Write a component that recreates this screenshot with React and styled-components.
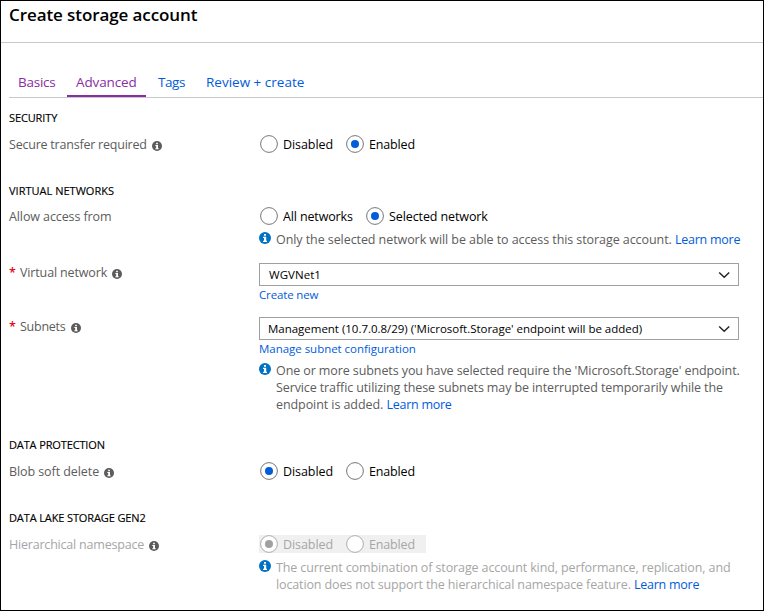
import React from "react";
import styled, { createGlobalStyle } from "styled-components";

const GlobalStyle = createGlobalStyle`
  *, *::before, *::after { box-sizing: border-box; }
  body {
    margin: 0;
    background: #fff;
    color: #000;
    font-family: "Open Sans", "Noto Sans", sans-serif;
    font-size: 12.5px;
    overflow: hidden;
  }
`;

const Blade = styled.main`
  height: 611px;
  border: 1px solid #000;
  background: #fff;
`;

const Header = styled.header`
  height: 42px;
  padding-left: 8px;
  border-bottom: 1px solid #c8c8c8;
`;

const Title = styled.h1`
  margin: 0;
  font-size: 17px;
  font-weight: 600;
  line-height: 27px;
  letter-spacing: -0.09px;
`;

const TabBar = styled.nav`
  display: flex;
  align-items: flex-end;
  height: 55px;
  margin-left: 8px;
  border-bottom: 1px solid #c8c8c8;
`;

const Tab = styled.a`
  height: 28px;
  padding: 0 0 0 ${(p) => p.$inset ?? 9}px;
  width: ${(p) => p.$width}px;
  font-size: 13.5px;
  line-height: 27px;
  white-space: nowrap;
  letter-spacing: ${(p) => p.$track}px;
  color: ${(p) => (p.$visited ? "#8a2da5" : "#015cda")};
  border-bottom: 2px solid ${(p) => (p.$active ? "#8a2da5" : "transparent")};
`;

const Form = styled.div`
  padding: 11px 0 0 8px;
`;

const Section = styled.section`
  margin-bottom: ${(p) => p.$after}px;
`;

const SectionTitle = styled.h2`
  margin: 0 0 ${(p) => p.$gap ?? 8}px;
  font-size: 11px;
  font-weight: 500;
  line-height: 18px;
  letter-spacing: ${(p) => p.$track}px;
  -webkit-text-stroke: 0.15px #000;
`;

const Field = styled.div`
  display: grid;
  grid-template-columns: 250px 1fr;
  align-items: start;
  margin-top: ${(p) => p.$before ?? 0}px;
`;

const Label = styled.div`
  display: flex;
  align-items: center;
  height: 18px;
  white-space: nowrap;
  letter-spacing: ${(p) => p.$track}px;
  color: ${(p) => (p.$disabled ? "#a6a6a6" : "#5c5c5c")};
`;

const Required = styled.span`
  width: 11px;
  color: #e00b1c;
  font-size: 12.5px;
  font-weight: 600;
`;

const LabelIcon = styled.svg`
  flex: none;
  width: 10px;
  height: 10px;
  margin: 3px 0 0 5px;
`;

const RadioGroup = styled.div`
  display: flex;
  width: ${(p) => p.$width ?? 240}px;
  height: 18px;
  background: ${(p) => (p.$disabled ? "#f0f0f0" : "transparent")};
`;

const Option = styled.label`
  display: flex;
  align-items: center;
  width: ${(p) => p.$width}px;
  height: 18px;
  padding-left: 1px;
  white-space: nowrap;
  letter-spacing: ${(p) => p.$track}px;
  color: ${(p) => (p.$disabled ? "#a6a6a6" : "#000")};
`;

const RadioSvg = styled.svg`
  flex: none;
  width: 18px;
  height: 18px;
  margin-right: 5px;
`;

const Select = styled.div`
  display: flex;
  align-items: center;
  justify-content: space-between;
  width: 480px;
  height: 23px;
  padding: 0 8px 0 ${(p) => p.$inset}px;
  border: 1px solid #a0a0a0;
  font-size: 11.5px;
  white-space: nowrap;
  letter-spacing: ${(p) => p.$track}px;
`;

const Chevron = styled.svg`
  width: 12px;
  height: 8px;
`;

const Link = styled.a`
  color: #015cda;
  letter-spacing: ${(p) => p.$track ?? -0.25}px;
`;

const HelperLink = styled(Link)`
  display: block;
  height: 18px;
  font-size: 11.5px;
  line-height: 18px;
`;

const Message = styled.div`
  display: flex;
  margin-top: ${(p) => p.$before}px;
  color: ${(p) => (p.$disabled ? "#a6a6a6" : "#5c5c5c")};
`;

const MessageIcon = styled.svg`
  flex: none;
  width: 12px;
  height: 12px;
  margin: 1px 5px 0 0;
`;

const MessageBody = styled.div`
  line-height: 17px;
`;

const Line = styled.div`
  height: 17px;
  white-space: nowrap;
  letter-spacing: ${(p) => p.$track}px;
`;

const InfoShape = ({ color }) => (
  <>
    <circle cx="6" cy="6" r="6" fill={color} />
    <path d="M5 2h2v1.8H5zM4 4.700H7.200v4H8V10H4V8.700H5V6H4z" fill="#fff" />
  </>
);

const FieldLabel = ({ text, track, required, info, disabled }) => (
  <Label $track={track} $disabled={disabled}>
    {required && <Required>*</Required>}
    <span>{text}</span>
    {info && (
      <LabelIcon viewBox="0 0 12 12">
        <InfoShape color="#5c5c5c" />
      </LabelIcon>
    )}
  </Label>
);

const Radio = ({ label, width, track, checked, disabled }) => (
  <Option $width={width} $track={track} $disabled={disabled}>
    <RadioSvg viewBox="0 0 18 18">
      <circle cx="9" cy="9" r="8.4" fill="#fff" stroke={disabled ? "#adadad" : "#777"} />
      {checked && <circle cx="9" cy="9" r="4" fill={disabled ? "#a0a0a0" : "#015cda"} />}
    </RadioSvg>
    {label}
  </Option>
);

const Toggle = ({ value, disabled }) => (
  <RadioGroup $disabled={disabled} $width={167}>
    <Radio label="Disabled" width={86} track={-0.08} checked={value === "Disabled"} disabled={disabled} />
    <Radio label="Enabled" width={81} track={-0.16} checked={value === "Enabled"} disabled={disabled} />
  </RadioGroup>
);

const Dropdown = ({ value, track, inset }) => (
  <Select $track={track} $inset={inset}>
    <span>{value}</span>
    <Chevron viewBox="0 0 12 8">
      <path d="M1.200 1.500 6.200 6.300l5-4.800" fill="none" stroke="#222" strokeWidth="1.4" />
    </Chevron>
  </Select>
);

const Info = ({ before, disabled, lines, link }) => (
  <Message $before={before} $disabled={disabled}>
    <MessageIcon viewBox="0 0 12 12">
      <InfoShape color="#0072c6" />
    </MessageIcon>
    <MessageBody>
      {lines.map(([text, track], i) => (
        <Line key={text} $track={track}>
          {text}
          {i === lines.length - 1 && <> <Link>{link}</Link></>}
        </Line>
      ))}
    </MessageBody>
  </Message>
);

export default function App() {
  return (
    <>
      <GlobalStyle />
      <Blade>
        <Header>
          <Title>Create storage account</Title>
        </Header>
        <TabBar>
          <Tab $visited $width={58} $track={-0.25}>Basics</Tab>
          <Tab $visited $active $width={79} $track={-0.124}>Advanced</Tab>
          <Tab $width={51} $inset={12} $track={-0.42}>Tags</Tab>
          <Tab $width={120} $track={0}>Review + create</Tab>
        </TabBar>
        <Form>
          <Section $after={29}>
            <SectionTitle $track={-0.12}>SECURITY</SectionTitle>
            <Field>
              <FieldLabel text="Secure transfer required" track={-0.22} info />
              <Toggle value="Enabled" />
            </Field>
          </Section>

          <Section $after={23}>
            <SectionTitle $gap={7} $track={0.017}>VIRTUAL NETWORKS</SectionTitle>
            <Field>
              <FieldLabel text="Allow access from" track={-0.1} />
              <div>
                <RadioGroup>
                  <Radio label="All networks" width={106} track={-0.135} />
                  <Radio label="Selected network" width={130} track={-0.1} checked />
                </RadioGroup>
                <Info
                  before={6}
                  lines={[["Only the selected network will be able to access this storage account.", -0.074]]}
                  link="Learn more"
                />
              </div>
            </Field>
            <Field $before={15}>
              <FieldLabel text="Virtual network" track={-0.14} required info />
              <div>
                <Dropdown value="WGVNet1" track={0.05} inset={9} />
                <HelperLink $track={-0.15}>Create new</HelperLink>
              </div>
            </Field>
            <Field $before={13}>
              <FieldLabel text="Subnets" track={-0.25} required info />
              <div>
                <Dropdown
                  value="Management (10.7.0.8/29) ('Microsoft.Storage' endpoint will be added)"
                  track={-0.02}
                  inset={8}
                />
                <HelperLink $track={-0.03}>Manage subnet configuration</HelperLink>
                <Info
                  before={4}
                  lines={[
                    ["One or more subnets you have selected require the 'Microsoft.Storage' endpoint.", -0.095],
                    ["Service traffic utilizing these subnets may be interrupted temporarily while the", -0.109],
                    ["endpoint is added.", -0.076],
                  ]}
                  link="Learn more"
                />
              </div>
            </Field>
          </Section>

          <Section $after={29}>
            <SectionTitle $track={-0.13}>DATA PROTECTION</SectionTitle>
            <Field>
              <FieldLabel text="Blob soft delete" track={-0.08} info />
              <Toggle value="Disabled" />
            </Field>
          </Section>

          <Section $after={0}>
            <SectionTitle $track={-0.12}>DATA LAKE STORAGE GEN2</SectionTitle>
            <Field>
              <FieldLabel text="Hierarchical namespace" track={-0.2} info disabled />
              <div>
                <Toggle value="Disabled" disabled />
                <Info
                  before={6}
                  disabled
                  lines={[
                    ["The current combination of storage account kind, performance, replication, and", -0.115],
                    ["location does not support the hierarchical namespace feature.", -0.125],
                  ]}
                  link="Learn more"
                />
              </div>
            </Field>
          </Section>
        </Form>
      </Blade>
    </>
  );
}
